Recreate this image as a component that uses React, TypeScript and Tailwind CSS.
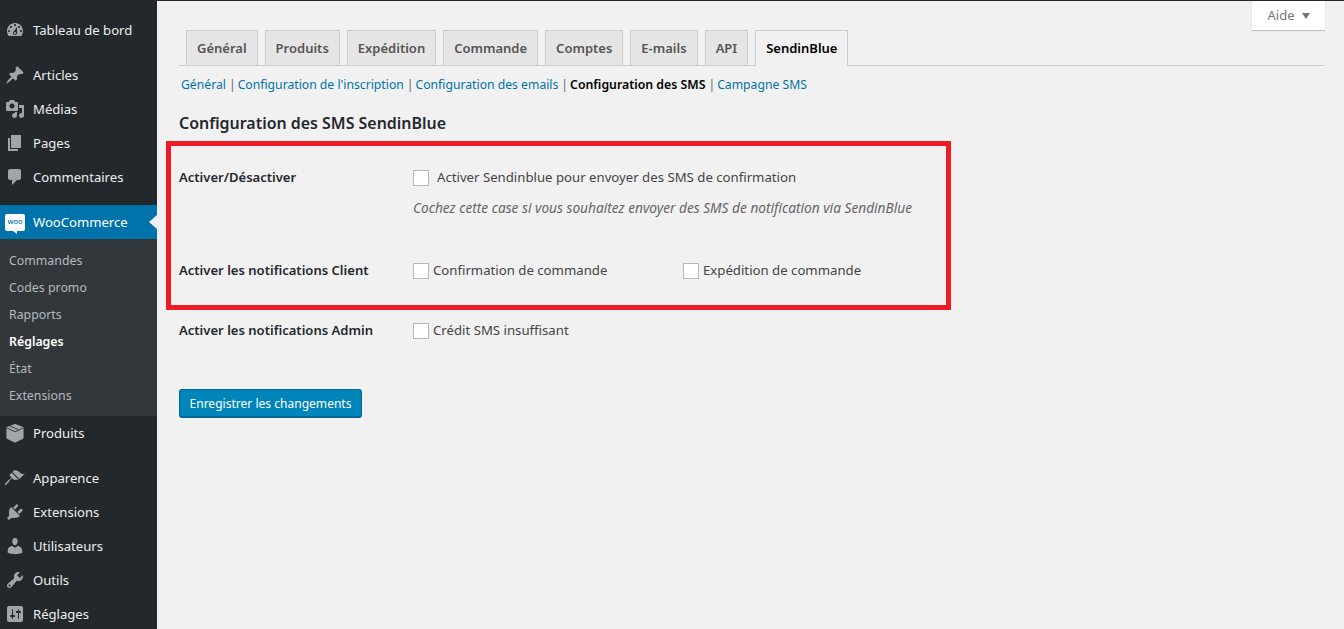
const icons: Record<string, string> = {
  dashboard:
    'M3.76 16h12.48c1.1-1.37 1.76-3.11 1.76-5 0-4.42-3.58-8-8-8s-8 3.58-8 8c0 1.89.66 3.63 1.76 5zM10 4c.55 0 1 .45 1 1s-.45 1-1 1-1-.45-1-1 .45-1 1-1zM6 6c.55 0 1 .45 1 1s-.45 1-1 1-1-.45-1-1 .45-1 1-1zm8 0c.55 0 1 .45 1 1s-.45 1-1 1-1-.45-1-1 .45-1 1-1zm-5.37 5.55L12 7v6c0 1.1-.9 2-2 2s-2-.9-2-2c0-.57.24-1.08.63-1.45zM4 10c.55 0 1 .45 1 1s-.45 1-1 1-1-.45-1-1 .45-1 1-1zm12 0c.55 0 1 .45 1 1s-.45 1-1 1-1-.45-1-1 .45-1 1-1zm-5 3c0-.55-.45-1-1-1s-1 .45-1 1 .45 1 1 1 1-.45 1-1z',
  post: 'M10.44 3.02l1.82-1.82 6.36 6.35-1.83 1.82c-1.05-.68-2.48-.57-3.41.36l-.75.75c-.92.93-1.04 2.35-.35 3.41l-1.83 1.82-2.41-2.41-2.8 2.79c-.42.42-3.38 2.71-3.8 2.29s1.86-3.39 2.28-3.81l2.79-2.79L4.1 9.36l1.83-1.82c1.05.69 2.48.57 3.4-.36l.75-.75c.93-.92 1.05-2.35.36-3.41z',
  media:
    'M13 11V4c0-.55-.45-1-1-1h-1.67L9 1H5L3.67 3H2c-.55 0-1 .45-1 1v7c0 .55.45 1 1 1h10c.55 0 1-.45 1-1zM7 4.5c1.38 0 2.5 1.12 2.5 2.5S8.38 9.5 7 9.5 4.5 8.38 4.5 7 5.62 4.5 7 4.5zM14 6h5v10.5c0 1.38-1.12 2.5-2.5 2.5S14 17.88 14 16.5s1.12-2.5 2.5-2.5c.17 0 .34.02.5.05V9h-3V6zm-4 8.05V13h2v3.5c0 1.38-1.12 2.5-2.5 2.5S7 17.88 7 16.5 8.12 14 9.5 14c.17 0 .34.02.5.05z',
  page: 'M6 15V2h10v13H6zm-1 1h8v2H3V5h2v11z',
  comments:
    'M5 2h9c1.1 0 2 .9 2 2v7c0 1.1-.9 2-2 2h-2l-5 5v-5H5c-1.1 0-2-.9-2-2V4c0-1.1.9-2 2-2z',
  product:
    'M9 1.2c.6-.25 1.4-.25 2 0l6.6 2.6c.6.25 1 .8 1 1.5v9.2c0 .65-.35 1.2-.95 1.5L11 19.2c-.6.3-1.4.3-2 0l-6.65-3.2c-.6-.3-.95-.85-.95-1.5V5.3c0-.7.4-1.25 1-1.5L9 1.2z',
  appearance:
    'M14.48 11.06L7.41 3.99l1.5-1.5c.5-.56 2.3-.47 3.51.32 1.21.8 1.43 1.28 2.91 2.1 1.18.64 2.45 1.26 4.45.85zm-.71.71L6.7 4.7 4.93 6.47c-.39.39-.39 1.02 0 1.41l1.06 1.06c.39.39.39 1.03 0 1.42-.6.6-1.43 1.11-2.21 1.69-.35.26-.7.53-1.01.84-1.43 1.43-4.25 3.81-3.52 4.53.72.73 3.09-2.1 4.52-3.53.31-.31.58-.66.84-1.01.58-.78 1.09-1.61 1.69-2.21.39-.39 1.02-.39 1.41 0l1.06 1.06c.39.39 1.02.39 1.41 0z',
  plugins:
    'M13.11 4.36L9.87 7.6 8 5.73l3.24-3.24c.35-.34 1.05-.2 1.56.32.52.51.66 1.21.31 1.55zm-8 1.77l.91-1.12 9.01 9.01-1.19.84c-.71.71-2.63 1.16-3.82 1.16H6.14L4.9 17.26c-.59.59-1.54.59-2.12 0-.59-.58-.59-1.53 0-2.12l1.24-1.24v-3.88c0-1.13.4-3.19 1.09-3.89zm7.26 3.97l3.24-3.24c.34-.35 1.04-.21 1.55.31.52.51.66 1.21.31 1.55l-3.24 3.25z',
  users:
    'M10 9.25c-2.27 0-2.73-3.44-2.73-3.44C7 4.02 7.82 2 9.97 2c2.16 0 2.98 2.02 2.71 3.81 0 0-.41 3.44-2.68 3.44zm0 2.57L12.72 10c2.39 0 4.52 2.33 4.52 4.53v2.49s-3.65 1.13-7.24 1.13c-3.65 0-7.24-1.13-7.24-1.13v-2.49c0-2.25 1.94-4.48 4.47-4.48z',
  tools:
    'M16.68 9.77c-1.34 1.34-3.3 1.67-4.95.99l-5.41 6.52c-.99.99-2.59.99-3.58 0s-.99-2.59 0-3.57l6.52-5.42c-.68-1.65-.35-3.61.99-4.95 1.28-1.28 3.12-1.62 4.72-1.06l-2.89 2.89 2.82 2.82 2.86-2.87c.53 1.58.18 3.39-1.08 4.65zM3.81 16.21c.4.39 1.04.39 1.43 0 .4-.4.4-1.04 0-1.43-.39-.4-1.03-.4-1.43 0-.39.39-.39 1.03 0 1.43z',
  settings:
    'M18 16V4c0-1.1-.9-2-2-2H4c-1.1 0-2 .9-2 2v12c0 1.1.9 2 2 2h12c1.1 0 2-.9 2-2zM8 11h1c.55 0 1 .45 1 1s-.45 1-1 1H8v1.5c0 .28-.22.5-.5.5s-.5-.22-.5-.5V13H6c-.55 0-1-.45-1-1s.45-1 1-1h1V5.5c0-.28.22-.5.5-.5s.5.22.5.5V11zm5-2h-1c-.55 0-1-.45-1-1s.45-1 1-1h1V5.5c0-.28.22-.5.5-.5s.5.22.5.5V7h1c.55 0 1 .45 1 1s-.45 1-1 1h-1v5.5c0 .28-.22.5-.5.5s-.5-.22-.5-.5V9z',
};

function MenuItem({ icon, label }: { icon: string; label: string }) {
  return (
    <div className="flex h-[34px] items-center text-[13.1px] text-[#eeeeee]">
      <svg viewBox="0 0 20 20" className="ml-[5px] mr-[8px] h-5 w-5 shrink-0 fill-[#a0a5aa]">
        <path d={icons[icon]} />
        {/* folds on the box icon */}
        {icon === 'product' && <path d="M1.8 5l8.2 3.8L18.2 5M5 3.1l8.5 3.6" fill="none" stroke="#23282d" strokeWidth="0.8" />}
      </svg>
      <span className="pt-[2px]">{label}</span>
    </div>
  );
}

function Sidebar() {
  const sub = ['Commandes', 'Codes promo', 'Rapports', 'Réglages', 'État', 'Extensions'];
  return (
    <aside className="w-[157px] shrink-0 bg-[#23282d] pt-[12px]">
      <MenuItem icon="dashboard" label="Tableau de bord" />
      <div className="mt-[11px]">
        <MenuItem icon="post" label="Articles" />
        <MenuItem icon="media" label="Médias" />
        <MenuItem icon="page" label="Pages" />
        <MenuItem icon="comments" label="Commentaires" />
      </div>
      <div className="relative mt-[11px] flex h-[34px] items-center bg-[#0073aa] text-[13.1px] text-white">
        <div className="relative ml-[5px] mr-[8px] flex h-[17px] w-5 items-center justify-center rounded-[2px] bg-white text-[7.5px] font-medium leading-none text-[#0073aa]">
          woo
          <div className="absolute -bottom-[3px] left-[8px] h-0 w-0 border-l-[4px] border-t-[3px] border-l-transparent border-t-white" />
        </div>
        <span className="pt-[2px]">WooCommerce</span>
        <div className="absolute right-0 top-[10px] h-0 w-0 border-y-[7px] border-r-[8px] border-y-transparent border-r-[#f1f1f1]" />
      </div>
      <div className="bg-[#32373c] pb-[7px] pt-[8px] text-[12.35px]">
        {sub.map((item) => (
          <div
            key={item}
            className={`flex h-[27px] items-center pl-[9px] pt-[2px] ${item === 'Réglages' ? 'font-semibold text-white' : 'text-[#b4b9be]'}`}
          >
            {item}
          </div>
        ))}
      </div>
      <MenuItem icon="product" label="Produits" />
      <div className="mt-[11px]">
        <MenuItem icon="appearance" label="Apparence" />
        <MenuItem icon="plugins" label="Extensions" />
        <MenuItem icon="users" label="Utilisateurs" />
        <MenuItem icon="tools" label="Outils" />
        <MenuItem icon="settings" label="Réglages" />
      </div>
    </aside>
  );
}

function Tabs() {
  const tabs = ['Général', 'Produits', 'Expédition', 'Commande', 'Comptes', 'E-mails', 'API'];
  return (
    <div className="flex h-[36px] gap-[7px] border-b border-[#cccccc] pl-[7px]">
      {tabs.map((tab) => (
        <div
          key={tab}
          className="flex h-[35px] items-center border border-b-0 border-[#cccccc] bg-[#e5e5e5] px-[10px] pt-[2px] text-[13px] font-semibold text-[#555555]"
        >
          {tab}
        </div>
      ))}
      <div className="flex h-[36px] items-center border border-b-0 border-[#cccccc] bg-[#f1f1f1] px-[10px] pt-[1px] text-[13px] font-semibold text-black">
        SendinBlue
      </div>
    </div>
  );
}

function SubNav() {
  const Sep = () => <span className="ml-[3px] mr-[2px] text-[#666666]">|</span>;
  return (
    <div className="mt-[10px] flex h-[18px] items-center pl-[2px] text-[12.2px] leading-[18px] text-[#0073aa]">
      <span>Général</span>
      <Sep />
      <span>Configuration de l'inscription</span>
      <Sep />
      <span>Configuration des emails</span>
      <Sep />
      <span className="text-[12.3px] font-semibold text-black">Configuration des SMS</span>
      <Sep />
      <span>Campagne SMS</span>
    </div>
  );
}

function Check({ label, gap = 'mr-[4px]' }: { label: string; gap?: string }) {
  return (
    <div className="mt-[1px] flex h-5 items-center text-[13.2px] text-[#444444]">
      <div className={`h-4 w-4 shrink-0 border border-[#b4b9be] bg-white ${gap}`} />
      {label}
    </div>
  );
}

export default function App() {
  return (
    <div className="flex h-[629px] overflow-hidden border-t border-[#23282d] bg-[#f1f1f1] font-['Noto_Sans',sans-serif]">
      <Sidebar />
      <main className="relative min-w-0 flex-1 pl-[22px] pr-[20px] pt-[29px]">
        <div className="absolute right-[19px] top-0 flex h-[29px] w-[73px] items-center justify-center gap-[7px] bg-white pt-[1px] text-[13px] text-[#72777c] shadow-[0_1px_1px_rgba(0,0,0,0.2)]">
          Aide
          <div className="h-0 w-0 border-x-[4px] border-t-[6px] border-x-transparent border-t-[#72777c]" />
        </div>
        <Tabs />
        <SubNav />
        <h2 className="mt-[18px] text-[15.95px] font-semibold leading-[22px] text-[#23282d]">
          Configuration des SMS SendinBlue
        </h2>

        <div className="mt-[33px] flex items-start">
          <div className="w-[234px] text-[13.05px] font-semibold leading-[20px] text-[#23282d]">Activer/Désactiver</div>
          <div>
            <Check label="Activer Sendinblue pour envoyer des SMS de confirmation" gap="mr-[8px]" />
            <p className="mt-[10px] text-[13.7px] italic leading-[20px] text-[#666666]">
              Cochez cette case si vous souhaitez envoyer des SMS de notification via SendinBlue
            </p>
          </div>
        </div>
        <div className="mt-[42px] flex items-start">
          <div className="w-[234px] text-[13.05px] font-semibold leading-[20px] text-[#23282d]">
            Activer les notifications Client
          </div>
          <div className="w-[270px]">
            <Check label="Confirmation de commande" />
          </div>
          <Check label="Expédition de commande" />
        </div>
        <div className="mt-[39px] flex items-start">
          <div className="w-[234px] text-[13.05px] font-semibold leading-[20px] text-[#23282d]">
            Activer les notifications Admin
          </div>
          <Check label="Crédit SMS insuffisant" />
        </div>

        <div className="mt-[48px] flex h-[29px] w-[183px] items-center justify-center rounded-[3px] border border-b-2 border-[#006799] bg-[#0085ba] pt-[2px] text-[12.05px] text-white">
          Enregistrer les changements
        </div>

        <div className="absolute left-[9px] top-[140px] h-[169px] w-[785px] border-[5px] border-[#ed1c24]" />
      </main>
    </div>
  );
}
